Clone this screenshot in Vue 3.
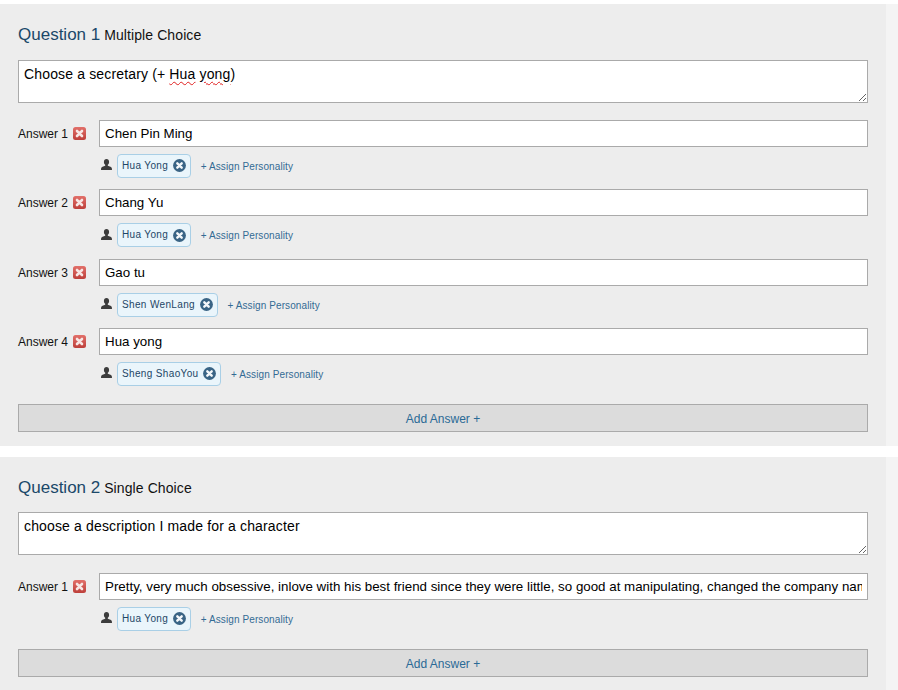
<script setup>
const questions = [
  { n: 1, type: 'Multiple Choice', text: 'Choose a secretary (+ Hua yong)', squiggle: true, answers: [
    { n: 1, text: 'Chen Pin Ming', who: 'Hua Yong' },
    { n: 2, text: 'Chang Yu', who: 'Hua Yong' },
    { n: 3, text: 'Gao tu', who: 'Shen WenLang' },
    { n: 4, text: 'Hua yong', who: 'Sheng ShaoYou' },
  ] },
  { n: 2, type: 'Single Choice', text: 'choose a description I made for a character', squiggle: false, answers: [
    { n: 1, text: "Pretty, very much obsessive, inlove with his best friend since they were little, so good at manipulating, changed the company name to his lover's name", who: 'Hua Yong' },
  ] },
]
</script>

<template>
  <div class="page">
    <section v-for="q in questions" :key="q.n" class="card">
      <div class="main">
        <h2 class="title"><span class="qnum">Question {{ q.n }}</span> <span class="qtype">{{ q.type }}</span></h2>
        <div class="question-box">
          <textarea class="question" :value="q.text" spellcheck="false"></textarea>
          <div v-if="q.squiggle" class="squiggles">Choose a secretary (+ <span class="wavy">Hua</span> <span class="wavy">yong</span>)</div>
        </div>
        <div v-for="a in q.answers" :key="a.n" class="answer">
          <div class="answer-row">
            <div class="label">
              <span class="label-text">Answer {{ a.n }}</span>
              <svg class="del" width="13" height="13" viewBox="0 0 13 13">
                <defs>
                  <linearGradient id="redg" x1="0" y1="0" x2="0" y2="1">
                    <stop offset="0" stop-color="#e2706a" />
                    <stop offset="1" stop-color="#bd3f3a" />
                  </linearGradient>
                </defs>
                <rect x="0" y="0" width="13" height="13" rx="2.500" fill="url(#redg)" />
                <path d="M4 4l5 5M9 4l-5 5" stroke="#f7e6e4" stroke-width="2.600" stroke-linecap="round" />
              </svg>
            </div>
            <input class="answer-input" :value="a.text" spellcheck="false" />
          </div>
          <div class="people">
            <svg class="user" width="11" height="11" viewBox="0 0 11 11">
              <path d="M5.500 0C7.100 0 8.100 1.200 8.100 2.900c0 1.200-.5 2.300-1.300 2.900v.9l2.600 1.100c1 .4 1.600 1 1.600 3.200H0C0 8.800.6 8.200 1.600 7.800l2.600-1.100v-.9C3.400 5.200 2.900 4.100 2.900 2.900 2.900 1.200 3.900 0 5.500 0z" fill="#3c3c3c" />
            </svg>
            <span class="tag">
              <span class="tag-name">{{ a.who }}</span>
              <svg class="tag-x" width="13" height="13" viewBox="0 0 13 13">
                <circle cx="6.500" cy="6.500" r="6.400" fill="#3a6485" />
                <path d="M4.300 4.300l4.400 4.400M8.700 4.300l-4.400 4.400" stroke="#f4f7fa" stroke-width="2.400" stroke-linecap="round" />
              </svg>
            </span>
            <a class="assign">+ Assign Personality</a>
          </div>
        </div>
        <button class="add">Add Answer +</button>
      </div>
    </section>
  </div>
</template>

<style>
body { background: #fff; }
</style>
<style scoped>
.page {
  padding-top: 4px;
  font-family: "Liberation Sans", Arial, sans-serif;
  height: 686px;
  overflow: hidden;
  display: flex;
  flex-direction: column;
  gap: 10.670px;
}
.card {
  background: #f4f4f4;
  flex: none;
}
.main {
  width: 886px;
  box-sizing: border-box;
  background: #ededed;
  padding: 20px 18px 14px;
}
.title {
  margin: 0 0 13.600px;
  font-weight: normal;
  font-size: 14px;
  line-height: 21px;
  color: #111;
}
.qnum {
  font-size: 17px;
  color: #1b4869;
}
.qtype { letter-spacing: 0.1px; }
.question-box { position: relative; height: 43px; margin-bottom: 17.400px; }
.question {
  display: block;
  width: 100%;
  height: 43px;
  box-sizing: border-box;
  border: 1px solid #aaa;
  background: #fff;
  margin: 0;
  padding: 5px;
  font: 14px/16px "Liberation Sans", Arial, sans-serif;
  letter-spacing: 0.15px;
  color: #000;
  outline: none;
}
.squiggles {
  position: absolute;
  left: 6px;
  top: 6px;
  font-size: 14px;
  letter-spacing: 0.15px;
  line-height: 16px;
  color: transparent;
  pointer-events: none;
}
.wavy {
  text-decoration: underline wavy #e02020 1px;
  text-underline-offset: 2px;
}
.answer { margin-bottom: 11.330px; }
.answer-row { display: flex; align-items: center; height: 27px; }
.label {
  width: 81px;
  flex: none;
  display: flex;
  align-items: center;
  gap: 4px;
  font-size: 12px;
  color: #111;
}
.label-text { margin-top: 1px; }
.del { margin-left: 1px; }
.answer-input {
  flex: 1;
  min-width: 0;
  height: 27px;
  box-sizing: border-box;
  border: 1px solid #aaa;
  background: #fff;
  margin: 0;
  padding: 0 5px;
  font: 13.333px "Liberation Sans", Arial, sans-serif;
  color: #000;
  outline: none;
}
.people {
  display: flex;
  align-items: center;
  margin-top: 7px;
  padding-left: 83px;
  height: 24px;
}
.user { flex: none; margin-right: 5px; margin-top: -2px; }
.tag {
  display: inline-flex;
  align-items: center;
  height: 24px;
  box-sizing: border-box;
  padding: 0 4px;
  border: 1px solid #a9cfe6;
  border-radius: 4px;
  background: #eaf5fb;
  color: #1d4666;
  font-size: 10px;
  letter-spacing: 0.35px;
}
.tag-name { margin-right: 5px; margin-top: -1px; }
.tag-x { flex: none; }
.assign {
  margin-left: 9.500px;
  margin-top: 1px;
  font-size: 10px;
  letter-spacing: 0.1px;
  color: #336b94;
}
.add {
  display: block;
  width: 100%;
  height: 28px;
  margin-top: 18px;
  box-sizing: border-box;
  border: 1px solid #aaa;
  background: #dcdcdc;
  color: #2a6a96;
  font: 12px "Liberation Sans", Arial, sans-serif;
  padding: 2px 0 0;
}
</style>
